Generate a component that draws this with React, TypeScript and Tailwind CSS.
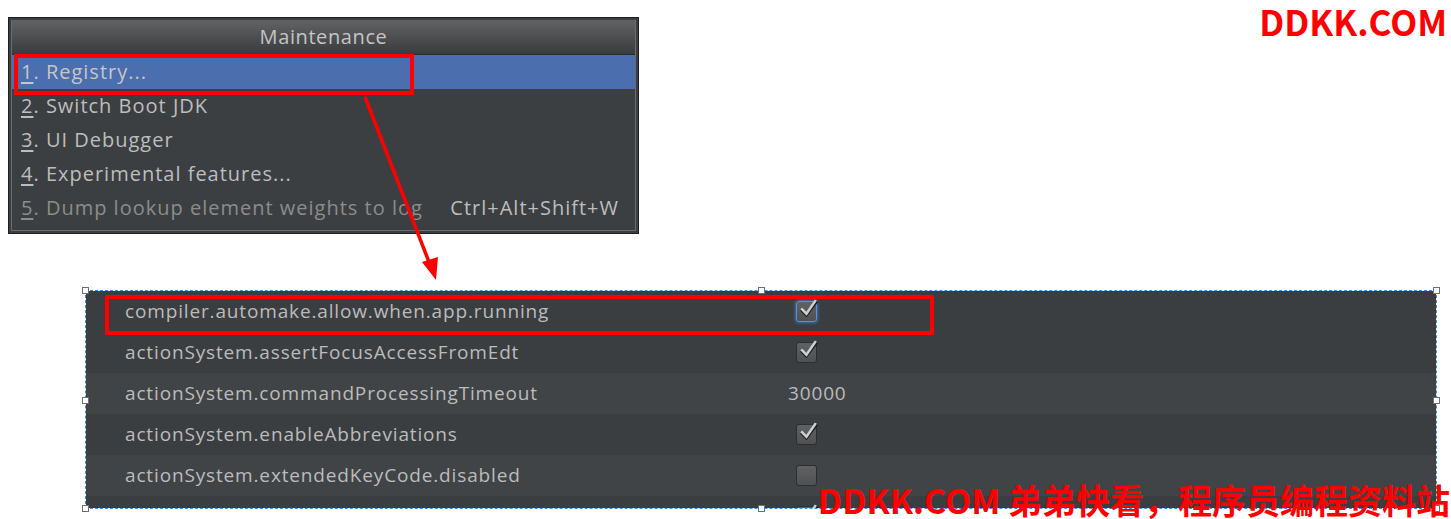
import React from "react";

const menuItems = [
  { n: "1", label: ". Registry...", selected: true },
  { n: "2", label: ". Switch Boot JDK" },
  { n: "3", label: ". UI Debugger" },
  { n: "4", label: ". Experimental features..." },
  { n: "5", label: ". Dump lookup element weights to log", disabled: true, shortcut: "Ctrl+Alt+Shift+W" },
];

type Row = { key: string; value: "checked" | "unchecked" | string; focus?: boolean };

const rows: Row[] = [
  { key: "compiler.automake.allow.when.app.running", value: "checked", focus: true },
  { key: "actionSystem.assertFocusAccessFromEdt", value: "checked" },
  { key: "actionSystem.commandProcessingTimeout", value: "30000" },
  { key: "actionSystem.enableAbbreviations", value: "checked" },
  { key: "actionSystem.extendedKeyCode.disabled", value: "unchecked" },
  { key: "", value: "checked" },
];

const rowBg = ["bg-[#3b3e41]", "bg-[#3b3e41]", "bg-[#414447]", "bg-[#3b3e41]", "bg-[#414447]", "bg-[#3b3e41]"];

function Checkbox({ checked, focus }: { checked: boolean; focus?: boolean }) {
  return (
    <div
      className={
        "relative w-[21px] h-[21px] rounded-[3px] bg-gradient-to-b from-[#5f6163] to-[#4f5153] border " +
        (focus ? "border-[#5b8fd6] shadow-[0_0_3px_1px_#3f6eb0]" : "border-[#2c2e30]")
      }
    >
      {checked && (
        <svg viewBox="0 0 21 21" className="absolute left-0 top-[-4px] w-[22px] h-[22px]">
          <path d="M4 11 L9 16 L19 3" fill="none" stroke="#1e1f20" strokeWidth="3" />
          <path d="M4 10 L9 15 L18 2" fill="none" stroke="#cfcfcf" strokeWidth="2.4" />
        </svg>
      )}
    </div>
  );
}

function Handle({ className }: { className: string }) {
  return <div className={"absolute w-[7px] h-[7px] bg-white border border-[#6f6f6f] " + className} />;
}

export default function App() {
  return (
    <div className="relative w-[1451px] h-[519px] bg-white overflow-hidden font-['Open_Sans',sans-serif]">
      {/* menu popup */}
      <div className="ml-[8px] mt-[17px] w-[631px] border border-[#1e1f20] p-[2px] bg-[#3c3f41]">
        <div className="border border-[#6a6b6c] border-t-0 pb-[5px]">
          <div className="h-[35px] flex items-center justify-center bg-gradient-to-b from-[#626365] to-[#3a3b3d] text-[#c4c4c4] text-[20px] tracking-[0.6px] border-b border-[#2a2a2a]">
            Maintenance
          </div>
          <div className="relative flex flex-col">
            {menuItems.map((it) => (
              <div
                key={it.n}
                className={
                  "h-[34px] flex items-center justify-between pl-[9px] pr-[16px] text-[20px] tracking-[1px] " +
                  (it.selected ? "bg-[#4b6eaf] text-[#c6c6c6]" : it.disabled ? "text-[#8c8c8c]" : "text-[#bdbdbd]")
                }
              >
                <span className="whitespace-nowrap">
                  <span className="underline underline-offset-[3px]">{it.n}</span>
                  {it.label}
                </span>
                {it.shortcut && <span className="text-[#bdbdbd] whitespace-nowrap">{it.shortcut}</span>}
              </div>
            ))}
            {/* annotation around Registry */}
            <div className="absolute left-[2px] -top-[1px] w-[400px] h-[41px] border-[4px] border-[#ff0000]" />
          </div>
        </div>
      </div>

      {/* registry table */}
      <div className="relative ml-[85px] mt-[56px] w-[1352px] h-[219px] border border-dashed border-[#3a8ee6]">
        <div className="h-full overflow-hidden flex flex-col">
          {rows.map((r, i) => (
            <div key={i} className={"h-[41px] shrink-0 flex items-center text-[19px] tracking-[0.85px] text-[#bbbbbb] " + rowBg[i]}>
              <div className="w-[702px] pl-[39px] whitespace-nowrap">{r.key}</div>
              {r.value === "checked" || r.value === "unchecked" ? (
                <div className="pl-[8px]">
                  <Checkbox checked={r.value === "checked"} focus={r.focus} />
                </div>
              ) : (
                <div>{r.value}</div>
              )}
            </div>
          ))}
        </div>
        {/* annotation around first row */}
        <div className="absolute left-[19px] top-[4px] w-[829px] h-[40px] border-[4px] border-[#ff0000] rounded-[2px]" />
        <Handle className="-left-[4px] -top-[4px]" />
        <Handle className="left-[672px] -top-[4px]" />
        <Handle className="-right-[4px] -top-[4px]" />
        <Handle className="-left-[4px] top-[106px]" />
        <Handle className="-right-[4px] top-[106px]" />
        <Handle className="-left-[4px] -bottom-[4px]" />
        <Handle className="left-[672px] -bottom-[4px]" />
        <Handle className="-right-[4px] -bottom-[4px]" />
      </div>

      {/* arrow */}
      <svg className="absolute left-0 top-0 pointer-events-none" width="1451" height="519">
        <line x1="365" y1="97" x2="429" y2="262" stroke="#ff0000" strokeWidth="3.5" />
        <polygon points="436,280 422,262 438,257" fill="#ff0000" />
      </svg>

      <div className="absolute right-[4px] top-0 text-[#ff0000] font-bold text-[35px] leading-[1.2] font-['Noto_Sans_CJK_SC',sans-serif]">
        DDKK.COM
      </div>
      <div className="absolute right-[1px] top-[480px] text-[#ff0000] font-bold text-[34px] leading-[1.15] whitespace-nowrap font-['Noto_Sans_CJK_SC',sans-serif]">
        DDKK.COM 弟弟快看，程序员编程资料站
      </div>
    </div>
  );
}
